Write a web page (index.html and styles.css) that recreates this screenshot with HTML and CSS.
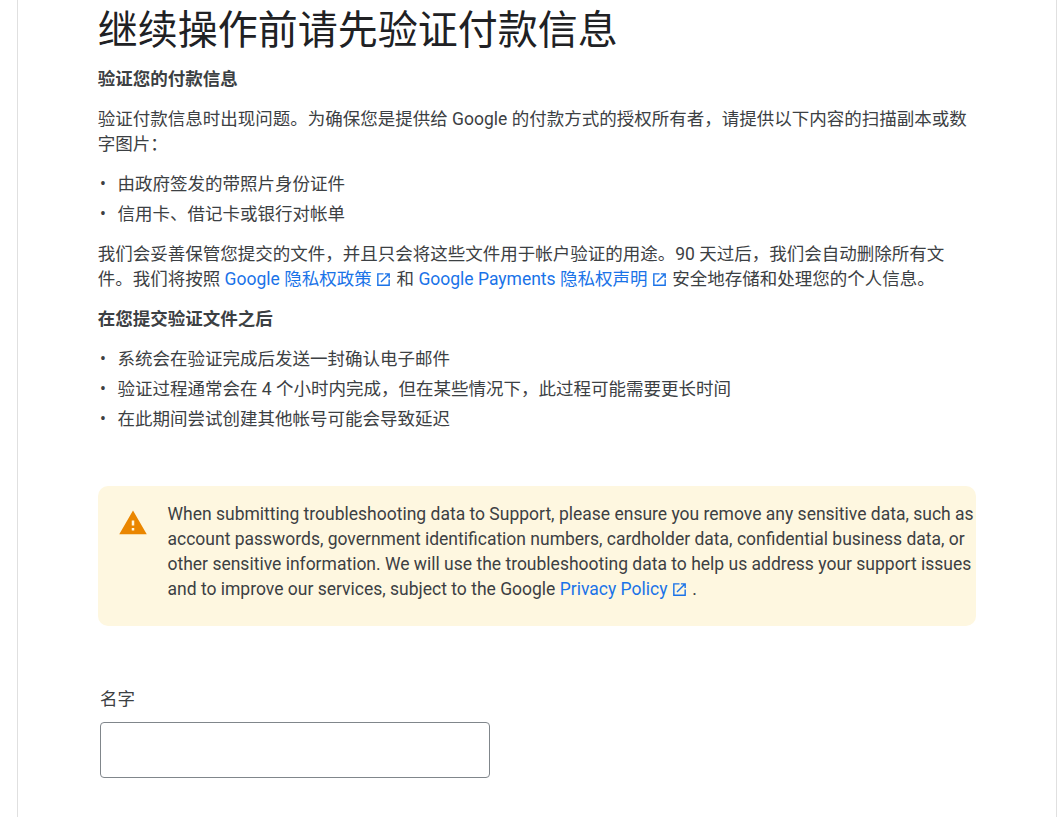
FILE: index.html
```html
<!DOCTYPE html>
<html lang="zh-CN">
<head>
<meta charset="utf-8">
<title>继续操作前请先验证付款信息</title>
<link rel="stylesheet" href="styles.css">
</head>
<body>
<main class="page">
  <h1 class="title">继续操作前请先验证付款信息</h1>
  <p class="subhead first">验证您的付款信息</p>
  <p class="para">验证付款信息时出现问题。为确保您是提供给 Google 的付款方式的授权所有者，请提供以下内容的扫描副本或数字图片：</p>
  <ul class="list">
    <li>由政府签发的带照片身份证件</li>
    <li>信用卡、借记卡或银行对帐单</li>
  </ul>
  <p class="para">我们会妥善保管您提交的文件，并且只会将这些文件用于帐户验证的用途。90 天过后，我们会自动删除所有文件。我们将按照 <a class="link" href="#">Google 隐私权政策<svg class="ext" viewBox="0 0 24 24"><path d="M19 19H5V5h7V3H3v18h18v-9h-2v7zM14 3v2h3.59l-9.83 9.83 1.41 1.41L19 6.41V10h2V3h-7z"/></svg></a> 和 <a class="link" href="#">Google Payments 隐私权声明<svg class="ext" viewBox="0 0 24 24"><path d="M19 19H5V5h7V3H3v18h18v-9h-2v7zM14 3v2h3.59l-9.83 9.83 1.41 1.41L19 6.41V10h2V3h-7z"/></svg></a> 安全地存储和处理您的个人信息。</p>
  <p class="subhead">在您提交验证文件之后</p>
  <ul class="list">
    <li>系统会在验证完成后发送一封确认电子邮件</li>
    <li>验证过程通常会在 4 个小时内完成，但在某些情况下，此过程可能需要更长时间</li>
    <li>在此期间尝试创建其他帐号可能会导致延迟</li>
  </ul>
  <section class="notice">
    <svg class="warn" viewBox="0 0 24 24"><path fill-rule="evenodd" d="M1 21h22L12 2 1 21zm12-3h-2v-2h2v2zm0-4h-2v-4h2v4z"/></svg>
    <p class="notice-text">When submitting troubleshooting data to Support, please ensure you remove any sensitive data, such as account passwords, government identification numbers, cardholder data, confidential business data, or other sensitive information. We will use the troubleshooting data to help us address your support issues and to improve our services, subject to the Google <a class="link" href="#">Privacy Policy<svg class="ext" viewBox="0 0 24 24"><path d="M19 19H5V5h7V3H3v18h18v-9h-2v7zM14 3v2h3.59l-9.83 9.83 1.41 1.41L19 6.41V10h2V3h-7z"/></svg></a> .</p>
  </section>
  <label class="field">
    <span class="field-label">名字</span>
    <input class="field-input" type="text">
  </label>
</main>
</body>
</html>
```
FILE: styles.css
```css
html, body { margin: 0; padding: 0; height: 817px; overflow: hidden; background: #fff; }
body { font-family: Roboto, "Noto Sans CJK SC", sans-serif; color: #3c4043; font-size: 17.5px; }
.page { box-sizing: border-box; width: 1040px; height: 817px; margin-left: 17px; padding: 0 0 0 80px; border-left: 1px solid #e0e0e0; border-right: 1px solid #e0e0e0; overflow: hidden; }
.title { margin: 5px 0 0 -0.25px; font-size: 40px; line-height: 52px; font-weight: 400; color: #202124; }
.subhead { margin: 15px 0 0 -0.25px; line-height: 24px; font-weight: 700; }
.subhead.first { margin-top: 10px; }
.para { width: 878px; margin: 13px 0 0 -0.25px; line-height: 25px; }
.subhead + .para { margin-top: 16px; }
.list { margin: 12px 0 0; padding: 0 0 0 19.5px; line-height: 30px; list-style: none; }
.subhead + .list { margin-top: 13px; }
.list li { position: relative; }
.list li::before { content: "•"; position: absolute; left: -19.5px; width: 10px; text-align: center; }
.link { color: #1a73e8; text-decoration: none; }
.ext { width: 17px; height: 17px; margin-left: 3.5px; vertical-align: -3px; fill: #1a73e8; }
.notice { display: flex; align-items: flex-start; box-sizing: border-box; width: 878px; height: 140px; margin-top: 52px; padding: 16px 0 0 20px; background: #fef7e0; border-radius: 10px; }
.warn { flex: none; width: 30px; height: 30px; margin-top: 6px; fill: #ea8600; }
.notice-text { margin: 0 0 0 19.5px; line-height: 25px; }
.field { display: block; margin: 61px 0 0 2px; }
.field-label { display: block; line-height: 24px; }
.field-input { display: block; box-sizing: border-box; width: 390px; height: 56px; margin-top: 11px; border: 1px solid #80868b; border-radius: 4px; background: #fff; }
```
